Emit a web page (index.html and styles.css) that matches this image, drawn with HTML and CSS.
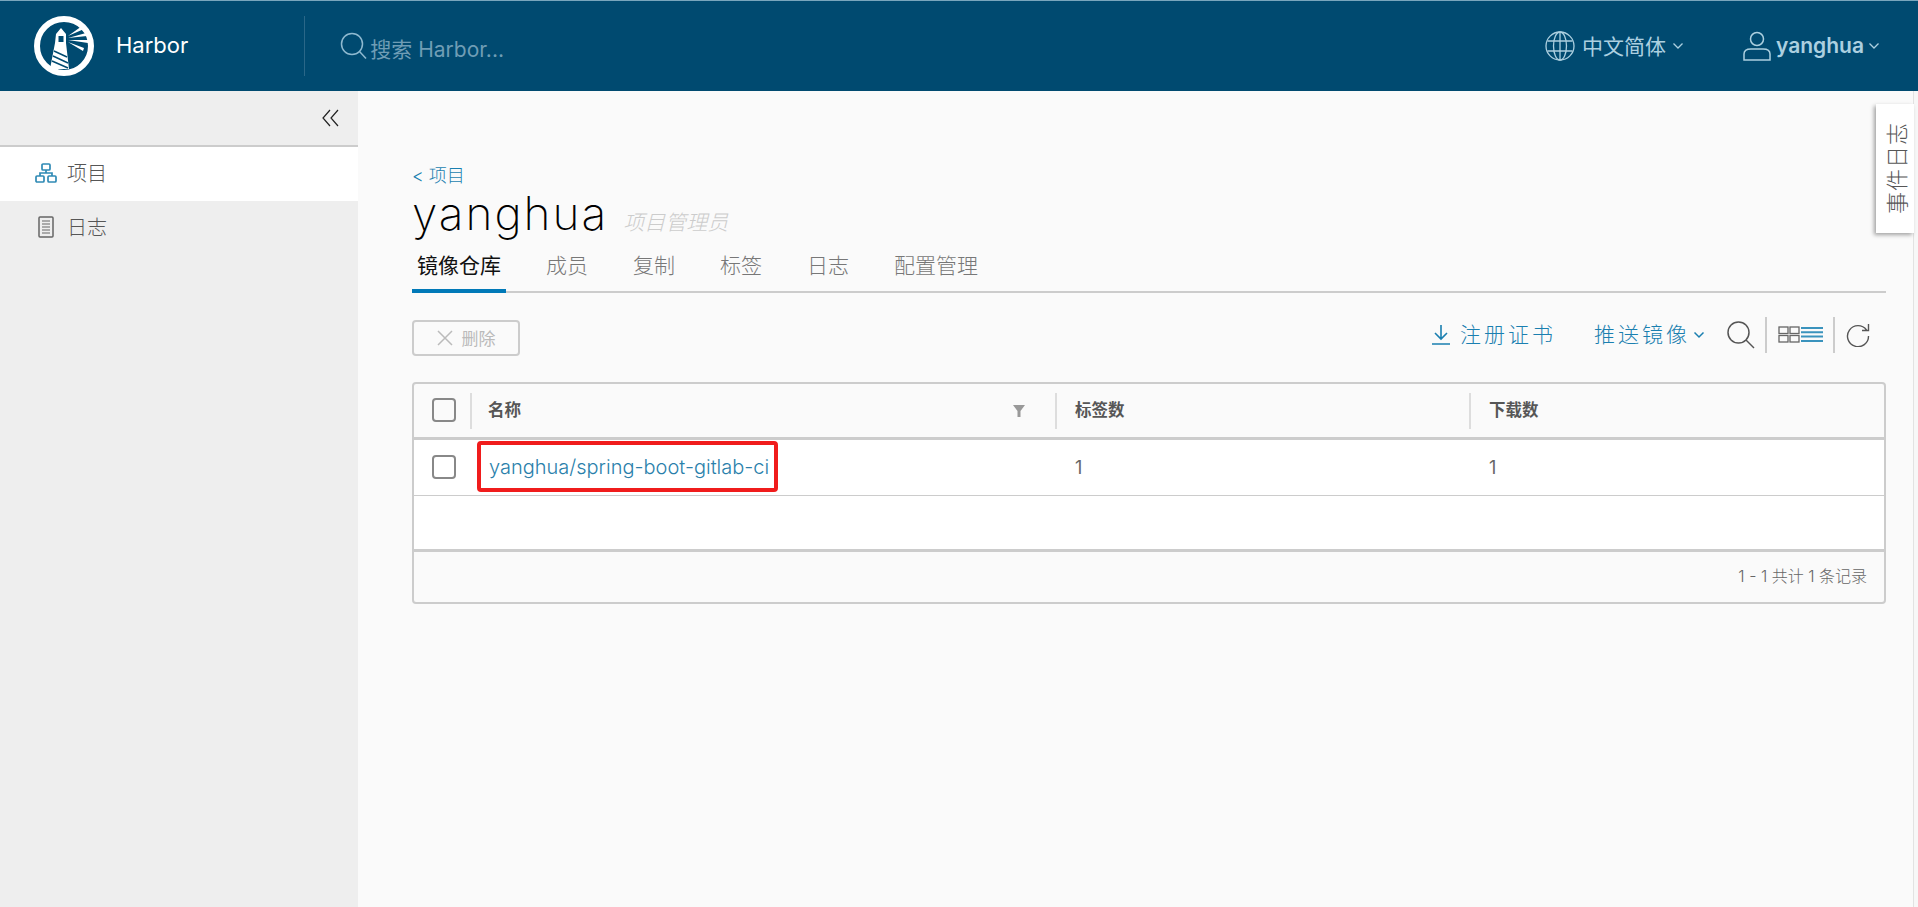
FILE: index.html
```html
<!DOCTYPE html>
<html lang="zh">
<head>
	<meta charset="utf-8">
	<title>Harbor</title>
	<link rel="stylesheet" href="styles.css">
</head>
<body>
	<header class="top">
		<svg class="logo" viewBox="0 0 60 60" width="60" height="60">
			<circle cx="30" cy="30" r="27" fill="none" stroke="#fff" stroke-width="6"/>
			<path d="M22 18 L27 12 L32 18 L32 27 L35 53 L16 53 L21 27 Z" fill="#fff"/>
			<path d="M24.500 20 h5 v6 h-5 Z" fill="#004a70"/>
			<path d="M20 35 L33 41 M19 40 L34 47 M18 45 L34 52" stroke="#004a70" stroke-width="1.500"/>
			<path d="M34 20 L48 10 L50 13 Z M34 22 L52 17 L53 20 Z M34 24 L54 24 L54 27 Z M34 26 L50 32 L49 35 Z" fill="#fff"/>
		</svg>
		<span class="brand">Harbor</span>
		<div class="top-sep"></div>
		<svg class="search-ico" viewBox="0 0 28 28" width="28" height="28" fill="none" stroke="#8fbad0" stroke-width="1.500">
			<circle cx="12" cy="12" r="10.500"/><path d="M19.500 19.500 L26 26.500"/>
		</svg>
		<span class="search-txt">搜索 Harbor...</span>
		<div class="top-right">
			<svg viewBox="0 0 30 30" width="30" height="30" fill="none" stroke="#acd0e0" stroke-width="1.300">
				<circle cx="15" cy="15" r="14"/><ellipse cx="15" cy="15" rx="6.500" ry="14"/>
				<path d="M15 1 V29 M2.500 10 H27.500 M2.500 20 H27.500"/>
			</svg>
			<span class="lang">中文简体</span>
			<svg class="chev" viewBox="0 0 12 8" width="12" height="8" fill="none" stroke="#acd0e0" stroke-width="1.300"><path d="M1.500 1.500 L6 6 L10.500 1.500"/></svg>
			<svg class="user-ico" viewBox="0 0 28 30" width="28" height="30" fill="none" stroke="#acd0e0" stroke-width="1.500">
				<circle cx="14" cy="8" r="6.500"/><path d="M1 29 V23 Q1 18 8 18 H20 Q27 18 27 23 V29 Z"/>
			</svg>
			<span class="user">yanghua</span>
			<svg class="chev" viewBox="0 0 12 8" width="12" height="8" fill="none" stroke="#acd0e0" stroke-width="1.300"><path d="M1.500 1.500 L6 6 L10.500 1.500"/></svg>
		</div>
	</header>
	<div class="wrap">
		<nav class="side">
			<div class="collapse">
				<svg viewBox="0 0 17 18" width="17" height="18" fill="none" stroke="#222" stroke-width="1.200"><path d="M8 1 L1 9 L8 17 M16 1 L9 9 L16 17"/></svg>
			</div>
			<a class="side-item active">
				<svg viewBox="0 0 22 20" width="22" height="20" fill="none" stroke="#2f8ab5" stroke-width="1.700">
					<rect x="7" y="1" width="8" height="6" rx="1"/><rect x="1" y="13" width="8" height="6" rx="1"/><rect x="13" y="13" width="8" height="6" rx="1"/>
					<path d="M11 7 V10 M5 13 V10 H17 V13"/>
				</svg>
				<span>项目</span>
			</a>
			<a class="side-item">
				<svg class="log-ico" viewBox="0 0 16 22" width="16" height="22" fill="none" stroke="#666" stroke-width="1.500">
					<rect x="1" y="1" width="14" height="20" rx="1"/><path d="M4 5 H12 M4 8 H12 M4 11 H12 M4 14 H12 M4 17 H12" stroke-width="1.200"/>
				</svg>
				<span>日志</span>
			</a>
		</nav>
		<main class="main">
			<a class="crumb">&lt; 项目</a>
			<div class="title-row">
				<h1>yanghua</h1>
				<span class="role">项目管理员</span>
			</div>
			<div class="tabs">
				<a class="tab on">镜像仓库</a>
				<a class="tab">成员</a>
				<a class="tab">复制</a>
				<a class="tab">标签</a>
				<a class="tab">日志</a>
				<a class="tab">配置管理</a>
			</div>
			<div class="tools">
				<button class="btn-del">
					<svg viewBox="0 0 16 16" width="16" height="16" fill="none" stroke="#bbb" stroke-width="1.500"><path d="M1 1 L15 15 M15 1 L1 15"/></svg>
					删除
				</button>
				<div class="tools-right">
					<a class="act">
						<svg viewBox="0 0 20 20" width="20" height="20" fill="none" stroke="#1a7fb0" stroke-width="1.600"><path d="M10 0 V14 M4 8 L10 14 L16 8 M1 19 H19"/></svg>
						<span class="cert">注册证书</span>
					</a>
					<a class="act push">
						<span class="cert">推送镜像</span>
						<svg viewBox="0 0 12 8" width="12" height="8" fill="none" stroke="#1a7fb0" stroke-width="1.500"><path d="M1.500 1.500 L6 6 L10.500 1.500"/></svg>
					</a>
					<svg class="t-search" viewBox="0 0 28 28" width="28" height="28" fill="none" stroke="#555" stroke-width="1.500"><circle cx="11.500" cy="11.500" r="10.500"/><path d="M19 19 L27 27"/></svg>
					<i class="vbar"></i>
					<svg viewBox="0 0 22 17" width="22" height="17" fill="none" stroke="#666" stroke-width="1.300"><rect x="1" y="1" width="9" height="6.500"/><rect x="12" y="1" width="9" height="6.500"/><rect x="1" y="9.500" width="9" height="6.500"/><rect x="12" y="9.500" width="9" height="6.500"/></svg>
					<svg class="list-ico" viewBox="0 0 22 17" width="22" height="17" stroke="#3a93bd" stroke-width="2"><path d="M0 2 H22 M0 6.300 H22 M0 10.600 H22 M0 15 H22"/></svg>
					<i class="vbar"></i>
					<svg class="refresh" viewBox="0 0 24 24" width="24" height="24" fill="none" stroke="#555" stroke-width="1.400"><path d="M20.500 7 A10.500 10.500 0 1 0 22.500 13 M22.500 1 V7.500 H16"/></svg>
				</div>
			</div>
			<div class="grid">
				<div class="row head">
					<div class="c-box"><i class="check"></i><i class="col-sep"></i></div>
					<div class="cell name">名称
						<svg class="filter" viewBox="0 0 12 12" width="12" height="12" fill="#999"><path d="M0 0 H12 L7.500 6 V12 H4.500 V6 Z"/></svg>
						<i class="col-sep end"></i>
					</div>
					<div class="cell">标签数<i class="col-sep end"></i></div>
					<div class="cell">下载数</div>
				</div>
				<div class="row body">
					<div class="c-box"><i class="check"></i></div>
					<div class="cell"><a class="repo">yanghua/spring-boot-gitlab-ci</a></div>
					<div class="cell">1</div>
					<div class="cell">1</div>
				</div>
				<div class="row body empty"></div>
				<div class="foot">1 - 1 共计 1 条记录</div>
			</div>
		</main>
		<div class="edge"></div>
	</div>
	<div class="event-tab"><span>事件日志</span></div>
</body>
</html>
```

FILE: styles.css
```css
* {
	box-sizing: border-box;
}
html, body {
	height: 100%;
}
body {
	margin: 0;
	font-family: Inter, "Noto Sans CJK SC", sans-serif;
	font-weight: 300;
	color: #565656;
	background: #fafafa;
	overflow: hidden;
	display: flex;
	flex-direction: column;
}
a {
	text-decoration: none;
}

/* top bar */
.top {
	height: 91px;
	flex: none;
	background: #004a70;
	border-top: 1px solid #79a6bd;
	display: flex;
	align-items: center;
	padding-left: 34px;
}
.brand {
	margin-left: 22px;
	color: #fff;
	font-size: 22px;
	font-weight: 400;
	margin-top: -2px;
}
.top-sep {
	width: 1px;
	height: 60px;
	background: #2a6788;
	margin-left: 116px;
}
.search-ico {
	margin-left: 35px;
}
.search-txt {
	margin-left: 2px;
	color: #6f9db5;
	font-size: 21px;
	font-weight: 400;
	margin-top: 3px;
}
.top-right {
	margin-left: auto;
	display: flex;
	align-items: center;
	color: #acd0e0;
	font-size: 21px;
	padding-right: 38px;
}
.lang {
	margin: -2px 0 0 7px;
	font-weight: 400;
}
.chev {
	margin-left: 6px;
}
.user-ico {
	margin-left: 59px;
}
.user {
	margin: -2px 0 0 5px;
	font-weight: 600;
}
.user + .chev {
	margin-left: 4px;
}

/* sidebar */
.wrap {
	flex: 1;
	display: flex;
	min-height: 0;
}
.side {
	width: 358px;
	flex: none;
	background: #eee;
}
.collapse {
	height: 56px;
	border-bottom: 2px solid #ccc;
	display: flex;
	align-items: center;
	justify-content: flex-end;
	padding-right: 19px;
}
.side-item {
	height: 54px;
	display: flex;
	align-items: center;
	padding: 0 0 3px 35px;
	gap: 10px;
	font-size: 20px;
	color: #565656;
}
.side-item.active {
	background: #fff;
}
.log-ico {
	margin: 0 3px;
}

/* main */
.main {
	flex: 1;
	min-width: 0;
	padding: 73px 27px 0 54px;
}
.edge {
	width: 5px;
	flex: none;
	border-left: 1px solid #e2e2e2;
	background: #f7f7f7;
}
.crumb {
	display: block;
	color: #1a7fb0;
	font-size: 18px;
	line-height: 24px;
}
.title-row {
	display: flex;
	align-items: baseline;
	height: 50px;
}
h1 {
	margin: 0;
	font-size: 46px;
	font-weight: 200;
	letter-spacing: 2px;
	color: #000;
	line-height: 50px;
}
.role {
	margin-left: 15px;
	font-size: 21px;
	font-style: italic;
	color: #ccc;
}
.tabs {
	display: flex;
	gap: 35px;
	margin-top: 9.500px;
	border-bottom: 2px solid #ccc;
	height: 45px;
}
.tab {
	padding: 0 5px;
	height: 45px;
	line-height: 36px;
	font-size: 21px;
	color: #777;
}
.tab.on {
	color: #111;
	font-weight: 400;
	border-bottom: 4px solid #0079b8;
}
.tools {
	display: flex;
	align-items: center;
	justify-content: space-between;
	margin-top: 27px;
	height: 36px;
}
.btn-del {
	width: 108px;
	height: 36px;
	border: 2px solid #ccc;
	border-radius: 4px;
	background: none;
	display: flex;
	align-items: center;
	justify-content: center;
	gap: 9px;
	font-family: inherit;
	font-size: 17px;
	color: #bbb;
}
.tools-right {
	display: flex;
	align-items: center;
	padding-right: 16px;
	margin-bottom: 6px;
}
.act {
	display: flex;
	align-items: center;
	color: #1a7fb0;
	font-size: 21px;
}
.cert {
	letter-spacing: 3px;
	margin: -3px 0 0 9px;
}
.push {
	margin-left: 38px;
}
.push .cert {
	margin-left: 0;
}
.push svg {
	margin-left: 3px;
}
.t-search {
	margin-left: 22px;
}
.vbar {
	width: 2px;
	height: 36px;
	background: #ccc;
	margin: 0 11px 0 10px;
}
.list-ico {
	margin-left: 1px;
}

/* datagrid */
.grid {
	margin-top: 26px;
	border: 2px solid #ccc;
	border-radius: 4px;
	height: 222px;
	overflow: hidden;
}
.row {
	display: grid;
	grid-template-columns: 58px 585px 414px 1fr;
	align-items: center;
}
.head {
	height: 56px;
	border-bottom: 3px solid #ccc;
	font-size: 16.500px;
	font-weight: 700;
}
.head .cell {
	padding-bottom: 2px;
}
.head .name {
	padding-left: 16px;
}
.body {
	height: 56px;
	background: #fff;
	border-bottom: 1px solid #ccc;
	font-size: 18px;
	font-weight: 400;
	color: #666;
}
.empty {
	border-bottom: 3px solid #ccc;
}
.c-box {
	position: relative;
	padding-left: 18px;
	height: 100%;
	display: flex;
	align-items: center;
}
.check {
	width: 24px;
	height: 24px;
	border: 2px solid #888;
	border-radius: 4px;
	background: #fff;
}
.head .check {
	background: none;
}
.cell {
	position: relative;
	padding-left: 18px;
	height: 100%;
	display: flex;
	align-items: center;
}
.col-sep {
	position: absolute;
	left: 58px;
	top: 9px;
	height: 36px;
	width: 2px;
	margin-left: -2px;
	background: #ddd;
}
.col-sep.end {
	left: auto;
	right: 0;
}
.filter {
	position: absolute;
	right: 32px;
	top: 21px;
}
.repo {
	position: relative;
	color: #2a7fab;
	font-size: 20px;
	font-weight: 300;
	white-space: nowrap;
	margin-left: -1px;
}
.repo::after {
	content: "";
	position: absolute;
	left: -12px;
	right: -9px;
	top: -14px;
	bottom: -13px;
	border: 4px solid #f01c1c;
	border-radius: 4px;
}
.foot {
	height: 47px;
	display: flex;
	align-items: center;
	justify-content: flex-end;
	padding-right: 17px;
	font-size: 16px;
	color: #666;
}

/* event log flap */
.event-tab {
	position: absolute;
	top: 104px;
	left: 1876px;
	width: 38px;
	height: 129px;
	background: #fff;
	box-shadow: -2px 2px 4px rgba(0, 0, 0, .35);
	display: flex;
	align-items: center;
	justify-content: center;
}
.event-tab span {
	writing-mode: vertical-rl;
	text-orientation: sideways;
	transform: rotate(180deg);
	font-size: 22px;
	color: #565656;
	letter-spacing: 1px;
}
```
